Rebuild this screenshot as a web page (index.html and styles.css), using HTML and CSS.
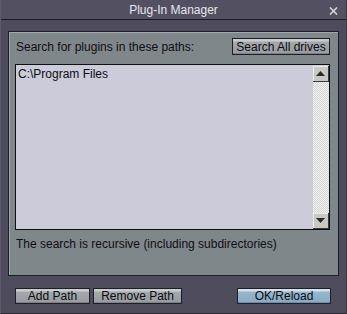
FILE: index.html
```html
<!DOCTYPE html>
<html lang="en">
<head>
    <meta charset="UTF-8">
    <title>Plug-In Manager</title>
    <link rel="stylesheet" href="styles.css">
</head>
<body>
    <div class="window">
        <div class="titlebar">
            <span class="title">Plug-In Manager</span>
            <svg class="close" width="9" height="8" viewBox="0 0 9 8">
                <path d="M1 0.5 L8 7.5 M8 0.5 L1 7.5" stroke="#d6d6de" stroke-width="1.6" fill="none"/>
            </svg>
        </div>

        <div class="panel">
            <div class="panel-head">
                <span>Search for plugins in these paths:</span>
                <button class="btn btn-drives">Search All drives</button>
            </div>

            <div class="listbox">
                <div class="list-items">
                    <div class="list-item">C:\Program Files</div>
                </div>
                <div class="scrollbar">
                    <div class="scroll-btn">
                        <svg width="9" height="5" viewBox="0 0 9 5"><path d="M4.5 0 L9 5 L0 5 Z" fill="#2a2a30"/></svg>
                    </div>
                    <div class="scroll-track"></div>
                    <div class="scroll-btn">
                        <svg width="9" height="5" viewBox="0 0 9 5"><path d="M0 0 L9 0 L4.5 5 Z" fill="#2a2a30"/></svg>
                    </div>
                </div>
            </div>

            <p class="note">The search is recursive (including subdirectories)</p>
        </div>

        <div class="footer">
            <button class="btn btn-add">Add Path</button>
            <button class="btn btn-remove">Remove Path</button>
            <button class="btn btn-ok">OK/Reload</button>
        </div>
    </div>
</body>
</html>
```

FILE: styles.css
```css
* {
    box-sizing: border-box;
}

body {
    margin: 0;
    background-color: #4e4b5d;
    font-family: "Liberation Sans", Arial, sans-serif;
    font-size: 12px;
}

.window {
    width: 347px;
    height: 314px;
    display: flex;
    flex-direction: column;
    background-color: #4e4b5d;
    border-left: 1px solid #5e5b6c;
    border-right: 1px solid #3a3846;
    border-bottom: 1px solid #2e2c38;
}

.titlebar {
    height: 20px;
    display: flex;
    align-items: center;
    justify-content: center;
    position: relative;
    background-color: #535062;
    border-bottom: 1px solid #1c1b24;
    color: #e6e6ee;
    font-size: 12px;
}

.close {
    position: absolute;
    right: 8px;
    top: 7px;
}

.panel {
    margin: 11px 7px 0 7px;
    height: 245px;
    border: 1px solid #1e1d26;
    box-shadow: inset 1px 1px 0 #a2a9ad;
    background-color: #7f878b;
    padding: 6px 8px 0 6px;
}

.panel-head {
    display: flex;
    align-items: center;
    justify-content: space-between;
    padding-left: 1px;
    color: #0e0e12;
}

.btn {
    font-family: "Liberation Sans", Arial, sans-serif;
    font-size: 12px;
    color: #0c0c10;
    height: 17px;
    padding: 0;
    border: 1px solid #1e1d28;
    background: linear-gradient(#c8cccf 0, #c8cccf 2px, #a5a9ad 3px, #979b9f 100%);
    box-shadow: inset 0 -1px 0 #7d8185;
}

.btn-drives {
    width: 98px;
}

.listbox {
    margin-top: 9px;
    height: 166px;
    display: flex;
    border: 1px solid #101014;
    background-color: #cbcbda;
}

.list-items {
    flex: 1;
    padding: 2px 2px;
    color: #0c0c10;
}

.scrollbar {
    width: 16px;
    display: flex;
    flex-direction: column;
    margin-top: 1px;
}

.scroll-btn {
    height: 16px;
    display: flex;
    align-items: center;
    justify-content: center;
    background-color: #c9c9c3;
    border-right: 1px solid #3a3a42;
    border-bottom: 1px solid #3a3a42;
    box-shadow: inset 1px 1px 0 #ecece8;
}

.scroll-track {
    flex: 1;
    background-color: #f2f2f2;
    background-image:
        linear-gradient(45deg, #d4d4d4 25%, transparent 25%, transparent 75%, #d4d4d4 75%),
        linear-gradient(45deg, #d4d4d4 25%, transparent 25%, transparent 75%, #d4d4d4 75%);
    background-size: 2px 2px;
    background-position: 0 0, 1px 1px;
}

.note {
    margin: 7px 0 0 1px;
    color: #0e0e12;
}

.footer {
    display: flex;
    padding: 12px 0 0 14px;
}

.btn-add {
    width: 75px;
    height: 16px;
}

.btn-remove {
    width: 89px;
    height: 16px;
    margin-left: 3px;
}

.btn-ok {
    width: 94px;
    height: 16px;
    margin-left: 55px;
    background: linear-gradient(#d4e0ea 0, #d4e0ea 2px, #96b6cc 3px, #88aac2 100%);
    box-shadow: inset 0 -1px 0 #6e8ea6;
}
```
